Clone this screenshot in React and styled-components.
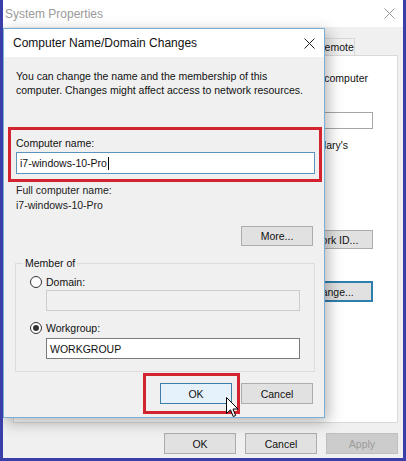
import React from "react";
import styled, { createGlobalStyle } from "styled-components";

const Global = createGlobalStyle`
  body {
    margin: 0;
    font-family: "Liberation Sans", Arial, sans-serif;
    font-size: 10.5px;
    color: #111;
  }
`;

const Frame = styled.div`
  width: 406px;
  height: 461px;
  box-sizing: border-box;
  border: 3px solid #3a3ea8;
  border-top: 0;
  position: relative;
  overflow: hidden;
  background: #f0f0f0;
  display: flex;
  flex-direction: column;
`;

const WinTitle = styled.div`
  height: 27px;
  flex: none;
  background: #fff;
  display: flex;
  align-items: center;
  justify-content: space-between;
  padding: 0 8px 0 2px;
  color: #9a9a9a;
  font-size: 12px;
`;

const CloseX = ({ color = "#333", size = 11 }) => (
  <svg width={size} height={size} viewBox="0 0 11 11">
    <path d="M0.5 0.5 L10.5 10.5 M10.5 0.5 L0.5 10.5" stroke={color} strokeWidth="1" fill="none" />
  </svg>
);

const WinBody = styled.div`
  flex: 1;
  display: flex;
  flex-direction: column;
  padding: 11px 5px 4px 10px;
  min-height: 0;
`;

const TabStrip = styled.div`
  height: 17px;
  display: flex;
  justify-content: flex-end;
  padding-right: 43px;
`;

const Tab = styled.div`
  width: 42px;
  box-sizing: border-box;
  border: 1px solid #d9d9d9;
  border-bottom: 0;
  background: #f0f0f0;
  padding: 2px 0 0 3px;
  line-height: 13px;
  overflow: hidden;
  white-space: nowrap;
`;

const Panel = styled.div`
  flex: 1;
  background: #fff;
  border: 1px solid #d9d9d9;
  margin-bottom: 10px;
  display: flex;
  justify-content: flex-end;
  padding-right: 24px;
`;

/* only the strip right of the dialog is ever seen */
const PanelContent = styled.div`
  width: 50px;
  overflow: hidden;
  display: flex;
  flex-direction: column;
  align-items: flex-end;
`;

const PanelLine = styled.div`
  white-space: nowrap;
  line-height: 13px;
  margin-top: ${(p) => p.top}px;
  margin-right: ${(p) => p.right || 0}px;
`;

const PanelField = styled.div`
  width: 160px;
  height: 17px;
  flex: none;
  box-sizing: border-box;
  border: 1px solid #a6a6a6;
  background: #fff;
  margin-top: 27px;
`;

const Button = styled.div`
  width: ${(p) => p.w || 72}px;
  height: ${(p) => p.h || 21}px;
  box-sizing: border-box;
  display: flex;
  align-items: center;
  justify-content: center;
  white-space: nowrap;
  background: ${(p) => (p.primary ? "#e5f1fb" : p.disabled ? "#cccccc" : "#e1e1e1")};
  border: ${(p) => (p.focus ? "2px solid #2f7fae" : p.primary ? "1px solid #3c7ea8" : p.disabled ? "1px solid #bfbfbf" : "1px solid #adadad")};
  color: ${(p) => (p.disabled ? "#9a9a9a" : "#111")};
  margin-top: ${(p) => p.top || 0}px;
  flex: none;
`;

const BottomRow = styled.div`
  display: flex;
  justify-content: flex-end;
  gap: 9px;
  flex: none;
`;

const Dialog = styled.div`
  position: absolute;
  left: 0;
  top: 28px;
  width: 322px;
  height: 390px;
  box-sizing: border-box;
  border: 1px solid #79aed6;
  background: #f0f0f0;
  box-shadow: 3px 4px 14px rgba(0, 0, 0, 0.3);
  display: flex;
  flex-direction: column;
`;

const DlgTitle = styled.div`
  height: 28px;
  flex: none;
  background: #fff;
  display: flex;
  align-items: center;
  justify-content: space-between;
  padding: 0 9px 0 9px;
  font-size: 12px;
  color: #111;
`;

const Intro = styled.div`
  padding: 12px 8px 0 12px;
  line-height: 14px;
`;

const NameBox = styled.div`
  margin: 30px 2px 0 4px;
  border: 3px solid #d2232e;
  padding: 6px 4px 5px 5px;
`;

const Label = styled.div`
  line-height: 14px;
`;

const Field = styled.div`
  height: ${(p) => p.h || 21}px;
  box-sizing: border-box;
  border: 1px solid ${(p) => (p.focus ? "#5a93bd" : p.disabled ? "#cccccc" : "#7a7a7a")};
  background: ${(p) => (p.disabled ? "#f0f0f0" : "#fff")};
  display: flex;
  align-items: center;
  padding-left: 3px;
  margin-top: ${(p) => p.top || 0}px;
  margin-left: ${(p) => p.left || 0}px;
  width: ${(p) => (p.w ? `${p.w}px` : "auto")};
`;

const Caret = styled.span`
  display: inline-block;
  width: 1px;
  height: 13px;
  background: #000;
  margin-left: 1px;
`;

const FullName = styled.div`
  padding: 1px 0 0 12px;
  line-height: 15px;
  color: #222;
`;

const RightRow = styled.div`
  display: flex;
  justify-content: flex-end;
  gap: 9px;
  padding-right: 11px;
  margin-top: ${(p) => p.top || 0}px;
`;

const Group = styled.fieldset`
  margin: 10px 9px 0 11px;
  padding: 0 0 12px 0;
  border: 1px solid #dcdcdc;
  min-width: 0;
`;

const Legend = styled.legend`
  margin-left: 7px;
  padding: 0 2px;
  line-height: 14px;
`;

const RadioRow = styled.div`
  display: flex;
  align-items: center;
  gap: 4px;
  padding-left: 14px;
  line-height: 14px;
  margin-top: ${(p) => p.top}px;
`;

const Radio = styled.span`
  width: 12px;
  height: 12px;
  box-sizing: border-box;
  border: 1px solid #333;
  border-radius: 50%;
  background: #fff;
  display: flex;
  align-items: center;
  justify-content: center;
  &::after {
    content: "";
    width: 6px;
    height: 6px;
    border-radius: 50%;
    background: ${(p) => (p.checked ? "#333" : "transparent")};
  }
`;

const OkWrap = styled.div`
  position: relative;
`;

const Highlight = styled.div`
  position: absolute;
  inset: -10px -8px -10px -17px;
  border: 3px solid #d2232e;
  pointer-events: none;
`;

const Pointer = styled.svg`
  position: absolute;
  left: 66px;
  top: 14px;
`;

export default function App() {
  return (
    <>
      <Global />
      <Frame>
        <WinTitle>
          <span>System Properties</span>
          <CloseX color="#999" />
        </WinTitle>
        <WinBody>
          <TabStrip>
            <Tab>Remote</Tab>
          </TabStrip>
          <Panel>
            <PanelContent>
              <PanelLine top={16} right={5}>
                computer
              </PanelLine>
              <PanelField />
              <PanelLine top={10} right={25}>
                Mary's
              </PanelLine>
              <Button w={90} h={19} top={78}>Network ID...</Button>
              <Button w={84} h={21} top={32} focus>Change...</Button>
            </PanelContent>
          </Panel>
          <BottomRow>
            <Button>OK</Button>
            <Button>Cancel</Button>
            <Button disabled>Apply</Button>
          </BottomRow>
        </WinBody>

        <Dialog>
          <DlgTitle>
            <span>Computer Name/Domain Changes</span>
            <CloseX color="#222" />
          </DlgTitle>
          <Intro>
            You can change the name and the membership of this
            <br />
            computer. Changes might affect access to network resources.
          </Intro>
          <NameBox>
            <Label>Computer name:</Label>
            <Field focus h={22} top={2}>
              i7-windows-10-Pro
              <Caret />
            </Field>
          </NameBox>
          <FullName>
            Full computer name:
            <br />
            i7-windows-10-Pro
          </FullName>
          <RightRow top={13}>
            <Button h={20}>More...</Button>
          </RightRow>
          <Group>
            <Legend>Member of</Legend>
            <RadioRow top={5}>
              <Radio />
              Domain:
            </RadioRow>
            <Field disabled w={254} left={30} top={1} />
            <RadioRow top={10}>
              <Radio checked />
              Workgroup:
            </RadioRow>
            <Field w={254} left={30} top={3}>WORKGROUP</Field>
          </Group>
          <RightRow top={11}>
            <OkWrap>
              <Button primary>OK</Button>
              <Highlight />
              <Pointer width="13" height="21" viewBox="0 0 13 21">
                <path
                  d="M0.5 0.5 L0.5 16.5 L4.5 12.8 L7.2 19.5 L9.6 18.5 L7 12 L12 12 Z"
                  fill="#fff"
                  stroke="#000"
                  strokeWidth="1"
                  strokeLinejoin="miter"
                />
              </Pointer>
            </OkWrap>
            <Button>Cancel</Button>
          </RightRow>
        </Dialog>
      </Frame>
    </>
  );
}
